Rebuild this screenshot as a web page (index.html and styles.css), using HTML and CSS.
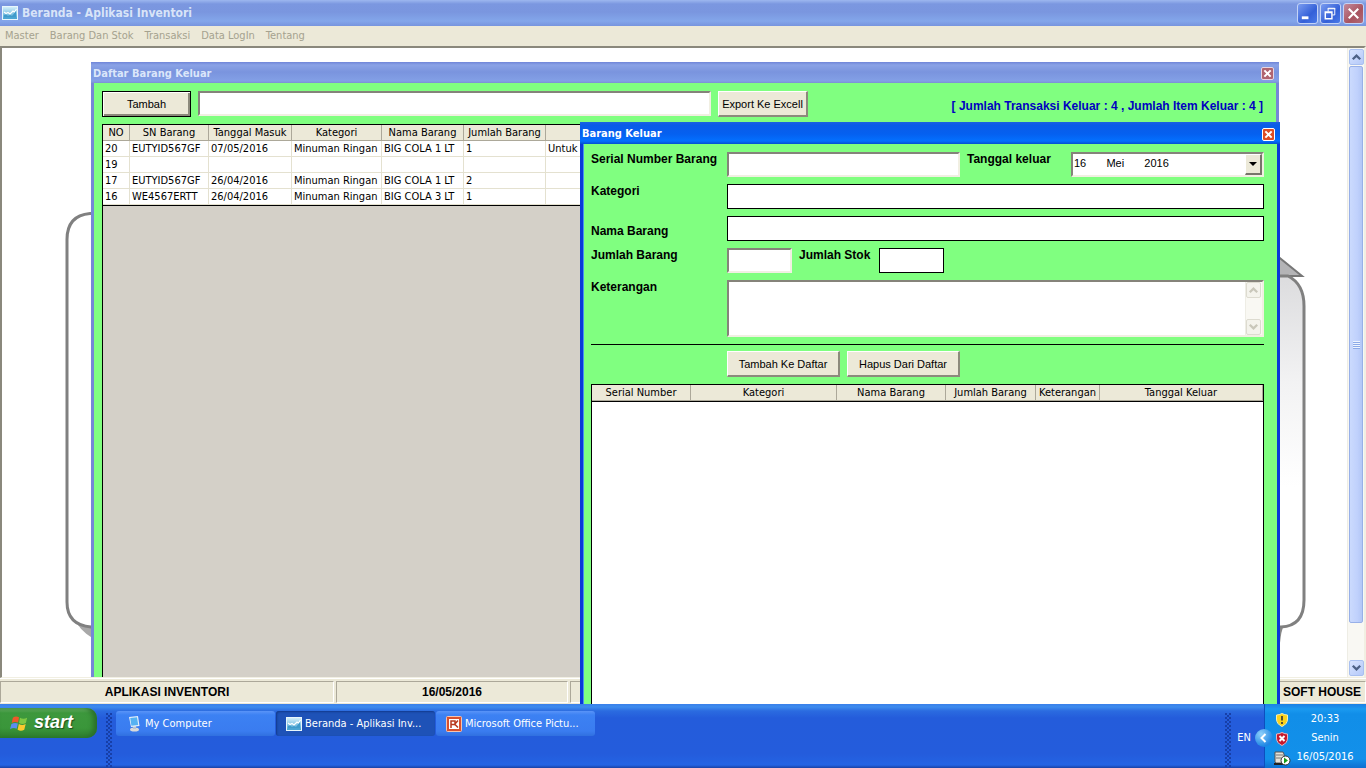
FILE: index.html
```
<!DOCTYPE html>
<html lang="id">
<head>
    <meta charset="UTF-8">
    <meta name="viewport" content="width=device-width, initial-scale=1.0">
    <title>Beranda - Aplikasi Inventori</title>
    <link rel="stylesheet" href="styles.css">
</head>
<body>
    <!-- shared icons -->
    <svg width="0" height="0" class="defs">
        <defs>
            <linearGradient id="sky" x1="0" y1="0" x2="0" y2="1">
                <stop offset="0" stop-color="#d8f2fc"/>
                <stop offset="1" stop-color="#3f9fd0"/>
            </linearGradient>
            <linearGradient id="panelShade" x1="0" y1="0" x2="0" y2="1">
                <stop offset="0" stop-color="#dcdcde"/>
                <stop offset="0.3" stop-color="#f2f2f3"/>
                <stop offset="0.6" stop-color="#ffffff"/>
                <stop offset="1" stop-color="#ffffff"/>
            </linearGradient>
            <symbol id="appIcon" viewBox="0 0 16 16">
                <rect x="0.5" y="1.5" width="15" height="13" fill="url(#sky)" stroke="#e8f6fc"/>
                <path d="M2 7l2 1.500 2-1 2 1.500 3-3 1.500 1L14.500 4" fill="none" stroke="#fff" stroke-width="1.2"/>
                <path d="M2 10l2-0.500 2 1.500 2-1 2 1 4-5v6.500H2z" fill="#3f9bcb"/>
            </symbol>
            <symbol id="cross" viewBox="0 0 14 14">
                <path d="M3 3l8 8M11 3l-8 8" stroke="#fff" stroke-width="2.6" fill="none"/>
            </symbol>
            <symbol id="chevron" viewBox="0 0 14 14">
                <path d="M3 9.500L7 5.500l4 4" fill="none" stroke="currentColor" stroke-width="2.400"/>
            </symbol>
        </defs>
    </svg>

    <div class="app">
        <header class="titlebar">
            <svg class="icon"><use href="#appIcon"/></svg>
            <h1>Beranda - Aplikasi Inventori</h1>
            <div class="window-buttons">
                <button type="button" aria-label="Minimize">
                    <svg viewBox="0 0 20 20"><rect x="4" y="13" width="7" height="3" fill="#fff"/></svg>
                </button>
                <button type="button" aria-label="Restore">
                    <svg viewBox="0 0 20 20"><path d="M7.500 8V4.500h7v7H12M7 5h8" fill="none" stroke="#fff"/><path d="M4.500 8.500h7v7h-7zM4 9h8" fill="none" stroke="#fff" stroke-width="1.500"/></svg>
                </button>
                <button type="button" class="close" aria-label="Close">
                    <svg viewBox="0 0 20 20"><path d="M5 5l10 10M15 5L5 15" stroke="#fff" stroke-width="2.200"/></svg>
                </button>
            </div>
        </header>

        <nav class="menubar">
            <a href="#">Master</a>
            <a href="#">Barang Dan Stok</a>
            <a href="#">Transaksi</a>
            <a href="#">Data LogIn</a>
            <a href="#">Tentang</a>
        </nav>

        <main class="workspace">
            <div class="canvas">
                <svg class="wallpaper" width="1344" height="630" viewBox="2 48 1344 630">
                    <path d="M78 625q6 9 20 16v-16z" fill="#a8a8a8"/>
                    <path d="M1260 242l42 34h-42z" fill="#b4b4b6" stroke="#777" stroke-width="2"/>
                    <path d="M1260 625h24q-3 6-4 18h-20z" fill="#888"/>
                    <path d="M120 213.500H90q-23 2-23 26V602q0 23 24 25h40" fill="#fff" stroke="#808080" stroke-width="3"/>
                    <path d="M1240 276h48q16 8 16 30V600q0 26-23 27h-41z" fill="url(#panelShade)" stroke="#808080" stroke-width="3"/>
                </svg>

                <section class="window list-window">
                    <div class="window-title">
                        <h2>Daftar Barang Keluar</h2>
                        <button type="button" class="window-close" aria-label="Close"><svg><use href="#cross"/></svg></button>
                    </div>
                    <div class="window-body">
                        <div class="toolbar">
                            <button type="button" class="btn default">Tambah</button>
                            <input type="text" class="sunken search" aria-label="Cari barang">
                            <button type="button" class="btn export">Export Ke Excell</button>
                            <p class="summary">[ Jumlah Transaksi Keluar : 4 , Jumlah Item Keluar : 4 ]</p>
                        </div>
                        <div class="grid">
                            <table class="list-table">
                                <colgroup>
                                    <col class="c-no"><col class="c-sn"><col class="c-date"><col class="c-cat"><col class="c-name"><col class="c-qty"><col>
                                </colgroup>
                                <thead>
                                    <tr><th>NO</th><th>SN Barang</th><th>Tanggal Masuk</th><th>Kategori</th><th>Nama Barang</th><th>Jumlah Barang</th><th></th></tr>
                                </thead>
                                <tbody>
                                    <tr><td>20</td><td>EUTYID567GF</td><td>07/05/2016</td><td>Minuman Ringan</td><td>BIG COLA 1 LT</td><td>1</td><td>Untuk</td></tr>
                                    <tr><td>19</td><td></td><td></td><td></td><td></td><td></td><td></td></tr>
                                    <tr><td>17</td><td>EUTYID567GF</td><td>26/04/2016</td><td>Minuman Ringan</td><td>BIG COLA 1 LT</td><td>2</td><td></td></tr>
                                    <tr><td>16</td><td>WE4567ERTT</td><td>26/04/2016</td><td>Minuman Ringan</td><td>BIG COLA 3 LT</td><td>1</td><td></td></tr>
                                </tbody>
                            </table>
                        </div>
                    </div>
                </section>
            </div>

            <div class="scrollbar">
                <button type="button" aria-label="Scroll up"><svg><use href="#chevron"/></svg></button>
                <div class="track"><div class="thumb"><span class="thumb-grip"></span></div></div>
                <button type="button" class="down" aria-label="Scroll down"><svg><use href="#chevron"/></svg></button>
            </div>
        </main>

        <footer class="statusbar">
            <div class="panel name">APLIKASI INVENTORI</div>
            <div class="panel date">16/05/2016</div>
            <div class="panel vendor">SOFT HOUSE</div>
        </footer>

        <section class="window active form-window">
            <div class="window-title">
                <h2>Barang Keluar</h2>
                <button type="button" class="window-close" aria-label="Close"><svg><use href="#cross"/></svg></button>
            </div>
            <form class="window-body">
                <div class="row">
                    <label for="serial" class="lead">Serial Number Barang</label>
                    <input type="text" id="serial" class="sunken grow">
                    <label for="tanggal" class="date-label">Tanggal keluar</label>
                    <div class="sunken date-box">
                        <select id="tanggal">
                            <option>16 &emsp;&nbsp; Mei &emsp;&nbsp; 2016</option>
                        </select>
                        <span class="arrow"></span>
                    </div>
                </div>
                <div class="row">
                    <label for="kategori" class="lead">Kategori</label>
                    <input type="text" id="kategori" class="flat grow">
                </div>
                <div class="row low">
                    <label for="nama" class="lead">Nama Barang</label>
                    <input type="text" id="nama" class="flat grow">
                </div>
                <div class="row">
                    <label for="jumlah" class="lead">Jumlah Barang</label>
                    <input type="text" id="jumlah" class="sunken short">
                    <label for="stok" class="stock-label">Jumlah Stok</label>
                    <input type="text" id="stok" class="flat short">
                </div>
                <div class="row">
                    <label for="keterangan" class="lead">Keterangan</label>
                    <div class="sunken note-box">
                        <textarea id="keterangan"></textarea>
                        <div class="scrollbar disabled">
                            <button type="button" disabled aria-label="Scroll up"><svg><use href="#chevron"/></svg></button>
                            <div class="track"></div>
                            <button type="button" class="down" disabled aria-label="Scroll down"><svg><use href="#chevron"/></svg></button>
                        </div>
                    </div>
                </div>
                <hr>
                <div class="row actions">
                    <button type="button" class="btn">Tambah Ke Daftar</button>
                    <button type="button" class="btn">Hapus Dari Daftar</button>
                </div>
                <div class="grid blank">
                    <table>
                        <colgroup>
                            <col class="d-sn"><col class="d-cat"><col class="d-name"><col class="d-qty"><col class="d-note"><col>
                        </colgroup>
                        <thead>
                            <tr><th>Serial Number</th><th>Kategori</th><th>Nama Barang</th><th>Jumlah Barang</th><th>Keterangan</th><th>Tanggal Keluar</th></tr>
                        </thead>
                    </table>
                </div>
            </form>
        </section>
    </div>

    <div class="taskbar">
        <button type="button" class="start">
            <svg viewBox="0 0 20 20">
                <path d="M3 4q3-2.500 6.500-0.500L8.500 9Q5 7.500 1.800 9.500z" fill="#f0582a"/>
                <path d="M10.500 4q3.500 2 7.500 0l-1.300 5.500q-3.500 2-7.200 0z" fill="#7fc843"/>
                <path d="M1.500 10.500q3.500-2 6.800-0.500L7 15.500q-3.500-1.700-7 0.500z" fill="#5b8df0"/>
                <path d="M9.300 10.500q3.500 2 7.200 0L15 16.500q-3.500 2-7 0z" fill="#fbc92f"/>
            </svg>
            <span>start</span>
        </button>
        <div class="grip"></div>
        <div class="tasks">
            <button type="button" class="task">
                <svg class="icon" viewBox="0 0 16 16">
                    <ellipse cx="8.500" cy="13.500" rx="4.500" ry="2" fill="#d9d9d9"/>
                    <path d="M7 10h3v3H7z" fill="#b8c4d0"/>
                    <path d="M3 1l9-1 1.500 10-8.500 1z" fill="#e6f0fa"/>
                    <path d="M4.200 2l6.800-0.700 1.200 7.700-6.800 0.700z" fill="#55b2f2"/>
                </svg>
                <span>My Computer</span>
            </button>
            <button type="button" class="task current">
                <svg class="icon"><use href="#appIcon"/></svg>
                <span>Beranda - Aplikasi Inv...</span>
            </button>
            <button type="button" class="task">
                <svg class="icon" viewBox="0 0 16 16">
                    <rect x="0.500" y="0.500" width="15" height="15" rx="1" fill="#d8502e" stroke="#f6c3ae"/>
                    <rect x="3" y="3" width="10" height="10" fill="#fff"/>
                    <path d="M5 12V5h4v3.500H5M8 9l4-4.500M9 8.500l3 3" fill="none" stroke="#b8371c" stroke-width="1.500"/>
                </svg>
                <span>Microsoft Office Pictu...</span>
            </button>
        </div>
        <div class="grip"></div>
        <span class="lang">EN</span>
        <div class="tray">
            <button type="button" class="expand" aria-label="Show hidden icons">
                <svg viewBox="0 0 18 18"><path d="M10.500 5L6.500 9l4 4" fill="none" stroke="#fff" stroke-width="2"/></svg>
            </button>
            <div class="tray-icons">
                <svg viewBox="0 0 14 14">
                    <path d="M7 0.500q3 1.500 5.500 1.500v4q0 5-5.500 7.500Q1.500 11 1.500 6V2Q4 2 7 0.500z" fill="#f9d21c" stroke="#f7efb0"/>
                    <path d="M7 3v4.500M7 9v2" stroke="#333" stroke-width="1.600"/>
                </svg>
                <svg viewBox="0 0 14 14">
                    <path d="M7 0.500q3 1.500 5.500 1.500v4q0 5-5.500 7.500Q1.500 11 1.500 6V2Q4 2 7 0.500z" fill="#c5182c" stroke="#eab6bc"/>
                    <path d="M4.500 4l5 5M9.500 4l-5 5" stroke="#fff" stroke-width="2"/>
                </svg>
                <svg class="server" viewBox="0 0 17 15">
                    <path d="M1 1h8l1 2v9H2l-1-1z" fill="#e4e1d8" stroke="#555"/>
                    <path d="M2 4h7M2 7h7" stroke="#777"/>
                    <path d="M0 13h12" stroke="#222" stroke-width="2"/>
                    <circle cx="11.500" cy="9.500" r="4.500" fill="#fff" stroke="#333"/>
                    <path d="M10 6.500l4 3-4 3z" fill="#179b17"/>
                </svg>
            </div>
            <div class="clock">
                <span>20:33</span>
                <span>Senin</span>
                <span>16/05/2016</span>
            </div>
        </div>
    </div>
</body>
</html>
```

FILE: styles.css
```
* {
    box-sizing: border-box;
}

body {
    margin: 0;
    height: 100vh;
    display: flex;
    flex-direction: column;
    overflow: hidden;
    font-family: "DejaVu Sans Condensed", Tahoma, sans-serif;
    font-size: 11px;
    line-height: 14px;
    color: #000;
    background: #ece9d8;
}

button,
input,
select,
textarea {
    font: inherit;
    margin: 0;
    padding: 0;
    border: 0;
    border-radius: 0;
}

h1,
h2,
p {
    margin: 0;
}

.defs {
    position: absolute;
}

.icon {
    width: 16px;
    height: 16px;
    flex: none;
}

/* application frame */
.app {
    position: relative;
    flex: 1;
    min-height: 0;
    display: flex;
    flex-direction: column;
    overflow: hidden;
}

.titlebar {
    height: 26px;
    flex: none;
    display: flex;
    align-items: center;
    gap: 4px;
    padding: 0 2px;
    background: linear-gradient(#9db7ef 0, #7b97e0 4px, #7a96df 12px, #83a6ea 21px, #7794de 26px);
}

.titlebar h1 {
    flex: 1;
    font-size: 12px;
    color: #d8e4f8;
}

.window-buttons {
    display: flex;
    gap: 2px;
}

.window-buttons button {
    width: 21px;
    height: 21px;
    border: 1px solid #c3d3f7;
    border-radius: 3px;
    background: linear-gradient(135deg, #7a9cf0, #3460d8 60%, #4a7ae8);
}

.window-buttons button.close {
    background: linear-gradient(135deg, #c38a9c, #a8535f 60%, #b06a78);
}

.window-buttons svg {
    display: block;
    width: 19px;
    height: 19px;
}

.menubar {
    height: 20px;
    flex: none;
    display: flex;
    align-items: center;
    gap: 11px;
    padding: 0 5px;
    background: #ece9d8;
}

.menubar a {
    color: #a5a28f;
    text-decoration: none;
}

.workspace {
    flex: 1;
    min-height: 0;
    display: flex;
    border: 2px solid #8a887c;
    border-right-color: #f1efe2;
    border-bottom: 1px solid #f1efe2;
    background: #fff;
}

.canvas {
    position: relative;
    flex: 1;
    overflow: hidden;
}

.wallpaper {
    display: block;
}

/* scroll bars */
.scrollbar {
    width: 17px;
    flex: none;
    display: flex;
    flex-direction: column;
    padding: 1px;
    border-left: 1px solid #eeede5;
    background: #f9f8f3;
    color: #4d6185;
}

.scrollbar button {
    width: 15px;
    height: 16px;
    border: 1px solid #a9c0f0;
    border-radius: 2px;
    background: linear-gradient(135deg, #d8e4fe, #b5c9f9);
    color: inherit;
}

.scrollbar svg {
    display: block;
    width: 13px;
    height: 14px;
}

.scrollbar .down svg {
    transform: rotate(180deg);
}

.scrollbar .track {
    flex: 1;
    padding: 1px 0;
}

.thumb {
    height: 94%;
    display: flex;
    align-items: center;
    justify-content: center;
    border: 1px solid #98b0e8;
    border-radius: 2px;
    background: linear-gradient(90deg, #cbdafd, #c0d1fc 60%, #b3c7f6);
}

.thumb-grip {
    width: 7px;
    height: 8px;
    background: repeating-linear-gradient(#eef4fe 0 1px, #8caae8 1px 2px);
}

.scrollbar.disabled {
    padding: 0;
    color: #c9c7ba;
}

.scrollbar.disabled button {
    border-color: #dddbd0;
    background: #f4f3ec;
}

/* inner windows */
.window {
    position: absolute;
    display: flex;
    flex-direction: column;
    background: #80ff80;
    border: 3px solid #7687d6;
    border-width: 0 3px;
}

.window.active {
    border-color: #0a3ad8;
    box-shadow: inset 1px 0 #4a90f0;
}

.list-window {
    left: 89px;
    top: 14px;
    width: 1188px;
    height: 640px;
}

.form-window {
    left: 580px;
    top: 122px;
    bottom: 0;
    width: 700px;
}

.window-title {
    height: 21px;
    flex: none;
    display: flex;
    align-items: center;
    justify-content: space-between;
    margin: 0 -3px;
    padding: 2px 5px 0 2px;
    background: linear-gradient(#6f85d8 0, #8aa2e6 3px, #7a94de 10px, #83a0e6 19px, #7c90d4 21px);
}

.window-title h2 {
    font-size: 11px;
    color: #dbe6fa;
}

.active .window-title {
    height: 22px;
    background: linear-gradient(#1b62e0 0, #0a5ce8 3px, #0560f0 12px, #0370ff 19px, #0450d0 22px);
}

.active .window-title h2 {
    color: #fff;
}

.window-close {
    width: 13px;
    height: 13px;
    border: 1px solid #e8d5e0;
    border-radius: 2px;
    background: #b0646f;
}

.active .window-close {
    border-color: #fff;
    background: #dd4c25;
}

.window-close svg {
    display: block;
    width: 11px;
    height: 11px;
}

.window-body {
    flex: 1;
    min-height: 0;
    display: flex;
    flex-direction: column;
    padding: 8px 13px 0 8px;
    font-family: "Liberation Sans", Arial, sans-serif;
}

.toolbar {
    display: flex;
    gap: 7px;
    margin-bottom: 7px;
}

.btn {
    width: 113px;
    height: 26px;
    border: 1px solid #fff;
    border-right: 2px solid #8c8a7c;
    border-bottom: 2px solid #8c8a7c;
    background: #ece9d8;
    color: #000;
}

.btn.default {
    width: 89px;
    border-color: #000;
    border-width: 1px;
    box-shadow: inset 1px 1px #fff, inset -2px -2px #8c8a7c;
}

.btn.export {
    width: 90px;
}

.sunken {
    border: 2px solid #85837a;
    border-right-color: #f1efe2;
    border-bottom-color: #f1efe2;
    background: #fff;
}

.flat {
    border: 1px solid #000;
    background: #fff;
}

.search {
    width: 513px;
    height: 25px;
}

.summary {
    flex: 1;
    align-self: center;
    padding-top: 4px;
    text-align: right;
    font-size: 12px;
    font-weight: bold;
    white-space: nowrap;
    color: #0000c0;
}

/* data grids */
.grid {
    flex: 1;
    min-height: 0;
    overflow: hidden;
    border: 1px solid #000;
    border-bottom: 0;
    background: #d4d0c8;
    font-family: "DejaVu Sans Condensed", Tahoma, sans-serif;
}

.grid.blank {
    background: #fff;
}

.grid table {
    width: 100%;
    table-layout: fixed;
    border-collapse: separate;
    border-spacing: 0;
    border-bottom: 1px solid #000;
    background: #fff;
}

.grid th,
.grid td {
    height: 16px;
    padding: 0 2px;
    border-right: 1px solid #e4e1d0;
    border-bottom: 1px solid #e4e1d0;
    line-height: 15px;
    font-weight: normal;
    text-align: left;
    white-space: nowrap;
}

.grid th {
    border-right-color: #aca899;
    border-bottom-color: #aca899;
    background: #ece9d8;
    text-align: center;
}

.c-no { width: 27px; }
.c-sn { width: 79px; }
.c-date { width: 83px; }
.c-cat { width: 90px; }
.c-name { width: 82px; }
.c-qty { width: 82px; }

.d-sn { width: 99px; }
.d-cat { width: 146px; }
.d-name { width: 109px; }
.d-qty { width: 90px; }
.d-note { width: 64px; }

/* entry form */
.row {
    display: flex;
    gap: 7px;
    margin-bottom: 7px;
}

.row label {
    font-size: 12px;
    font-weight: bold;
    white-space: nowrap;
}

.row.low label {
    align-self: flex-end;
    padding-bottom: 3px;
}

.row .lead {
    width: 129px;
    flex: none;
}

.row input {
    height: 25px;
}

.grow {
    flex: 1;
    min-width: 0;
}

.date-label {
    width: 97px;
}

.stock-label {
    width: 73px;
}

.short {
    width: 65px;
}

.date-box {
    position: relative;
    width: 193px;
}

.date-box select {
    display: block;
    width: 100%;
    height: 18px;
    padding-left: 1px;
    appearance: none;
    background: none;
}

.arrow {
    position: absolute;
    top: 0;
    right: 0;
    bottom: 0;
    width: 17px;
    display: flex;
    align-items: center;
    justify-content: center;
    border: 1px solid #fff;
    border-right: 2px solid #77756a;
    border-bottom: 2px solid #77756a;
    background: #ece9d8;
    pointer-events: none;
}

.arrow::after {
    content: "";
    border: 4px solid transparent;
    border-top-color: #000;
    border-bottom: 0;
}

.note-box {
    flex: 1;
    height: 57px;
    display: flex;
}

.note-box textarea {
    flex: 1;
    resize: none;
    background: none;
}

hr {
    width: 100%;
    margin: 0 0 6px;
    border: 0;
    border-top: 1px solid #000;
}

.actions {
    padding-left: 136px;
}

/* status bar */
.statusbar {
    height: 26px;
    flex: none;
    display: flex;
    gap: 2px;
    padding: 2px 0 1px;
    background: #ece9d8;
    border-top: 1px solid #fff;
    font: bold 12px/20px "Liberation Sans", Arial, sans-serif;
}

.panel {
    border: 1px solid #aca899;
    border-right-color: #fff;
    border-bottom-color: #fff;
    text-align: center;
}

.panel.name {
    width: 334px;
}

.panel.date {
    width: 232px;
}

.panel.vendor {
    flex: 1;
    padding-right: 4px;
    text-align: right;
}

/* taskbar */
.taskbar {
    height: 64px;
    flex: none;
    display: flex;
    align-items: flex-start;
    background: linear-gradient(#3a80ea 0, #3d8bee 3px, #2b6be0 7px, #245cdb 14px, #245cdc 50px, #2464e4 61px, #1941a5 64px);
    color: #fff;
}

.start {
    width: 97px;
    height: 30px;
    margin: 4px 9px 0 0;
    display: flex;
    align-items: center;
    gap: 5px;
    padding-left: 10px;
    border-radius: 0 10px 10px 0;
    background: linear-gradient(#6cb46a 0, #3d983d 5px, #3a963a 20px, #2d7d2d 30px);
    box-shadow: inset -4px 0 5px #2a702a;
    color: #fff;
    font: italic bold 18px/24px "Liberation Sans", Arial, sans-serif;
    text-shadow: 1px 1px 1px #1d4d1d;
}

.start svg {
    width: 19px;
    height: 19px;
}

.start span {
    padding-bottom: 2px;
}

.grip {
    width: 6px;
    height: 54px;
    margin-top: 9px;
    flex: none;
    background:
        radial-gradient(circle at 1px 1px, #173fa8 1px, transparent 1px) 0 0 / 4px 4px,
        radial-gradient(circle at 1px 1px, #173fa8 1px, transparent 1px) 2px 2px / 4px 4px;
}

.tasks {
    flex: 1;
    min-width: 0;
    display: flex;
    gap: 1px;
    padding: 7px 0 0 4px;
}

.task {
    width: 159px;
    height: 25px;
    display: flex;
    align-items: center;
    gap: 3px;
    padding: 0 8px 0 10px;
    border-radius: 3px;
    background: linear-gradient(#5a94f8 0, #3c81f3 4px, #3a7cf0 20px, #3070e0 25px);
    color: #fff;
    text-align: left;
    white-space: nowrap;
}

.task.current {
    background: #1e52b7;
    box-shadow: inset 1px 1px 2px #123a8c;
}

.lang {
    padding: 27px 13px 0 6px;
}

.tray {
    position: relative;
    width: 102px;
    height: 64px;
    display: flex;
    border-left: 1px solid #0d4fbf;
    background: linear-gradient(#1c80e4 0, #1a9af0 5px, #118ee8 10px, #1290ea 55px, #0e6fd0 64px);
}

.expand {
    position: absolute;
    left: -10px;
    top: 25px;
    width: 18px;
    height: 18px;
    border-radius: 50%;
    background: radial-gradient(circle at 6px 5px, #8fd0fb, #1e86e4 70%);
}

.expand svg {
    display: block;
    width: 18px;
    height: 18px;
}

.tray-icons {
    width: 18px;
    display: flex;
    flex-direction: column;
    align-items: center;
    gap: 5px;
    margin-left: 8px;
    padding-top: 9px;
}

.tray-icons svg {
    width: 14px;
    height: 14px;
    flex: none;
}

.tray-icons .server {
    width: 17px;
    height: 15px;
}

.clock {
    flex: 1;
    display: flex;
    flex-direction: column;
    align-items: center;
    gap: 5px;
    padding: 8px 7px 0 0;
}
```
